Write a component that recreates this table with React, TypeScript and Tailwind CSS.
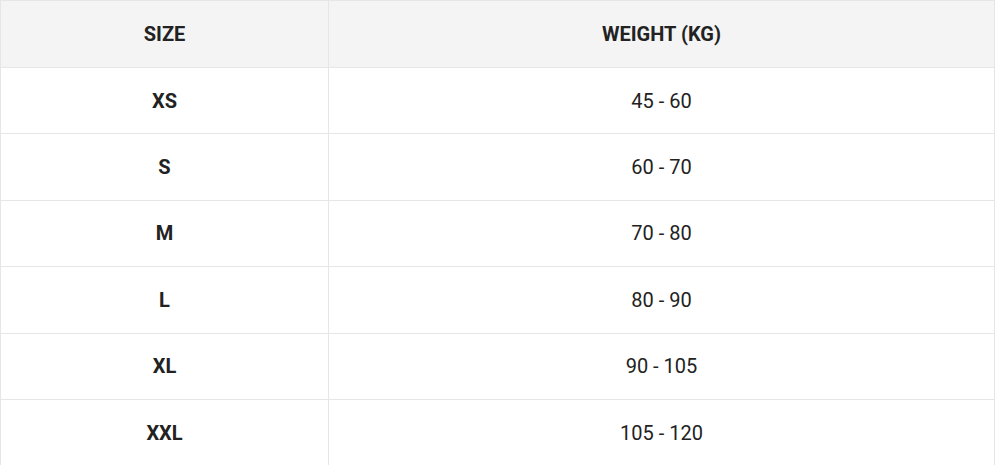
const rows = [
  { size: "XS", weight: "45 - 60" },
  { size: "S", weight: "60 - 70" },
  { size: "M", weight: "70 - 80" },
  { size: "L", weight: "80 - 90" },
  { size: "XL", weight: "90 - 105" },
  { size: "XXL", weight: "105 - 120" },
];

export default function App() {
  return (
    <div className="h-[465px] w-[1000px] overflow-hidden bg-white font-['Roboto',sans-serif] text-[#222]">
      <table className="w-[995px] table-fixed border-collapse">
        <thead>
          <tr className="h-[67px] bg-[#f4f4f4]">
            <th className="w-[328px] border border-[#e6e6e6] text-[20px] font-bold uppercase">Size</th>
            <th className="border border-[#e6e6e6] text-[20px] font-bold uppercase">Weight (kg)</th>
          </tr>
        </thead>
        <tbody>
          {rows.map((row) => (
            <tr key={row.size} className="h-[66.4px]">
              <td className="border border-[#e6e6e6] text-center text-[20px] font-bold">{row.size}</td>
              <td className="border border-[#e6e6e6] text-center text-[20px]">{row.weight}</td>
            </tr>
          ))}
        </tbody>
      </table>
    </div>
  );
}
